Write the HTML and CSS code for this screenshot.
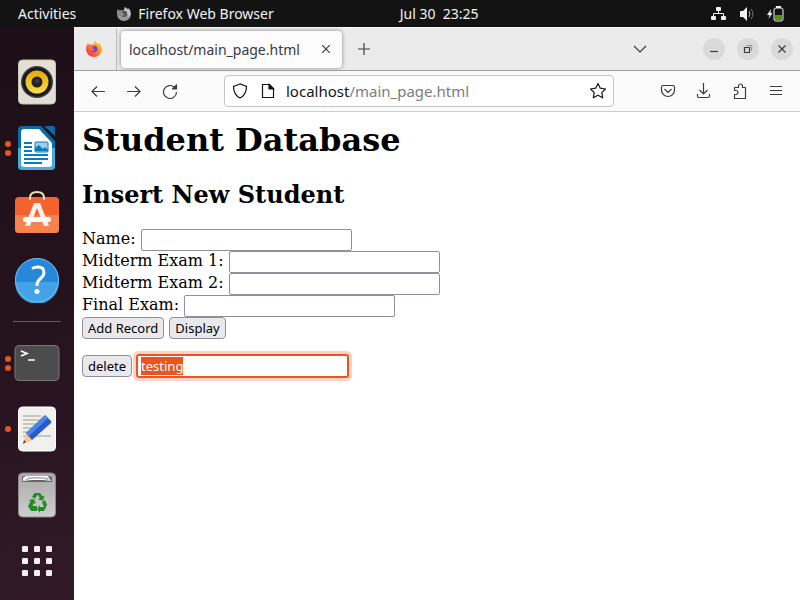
FILE: index.html
```html
<!DOCTYPE html>
<html lang="en">
<head>
<meta charset="utf-8">
<title>Student Database</title>
<link rel="stylesheet" href="styles.css">
</head>
<body>
<header class="topbar">
  <div class="topbar-left">
    <button class="top-btn" type="button">Activities</button>
    <button class="top-btn app-menu" type="button">
      <svg width="16" height="16" viewBox="0 0 16 16" aria-hidden="true"><path d="M8 15A7 7 0 0 1 1 8c0-2 0-3.500 1-5l1 1.500C4 4 5 4 6 4.500L8 4l1-3 2 2 1-1c2 1 3 4 3 6a7 7 0 0 1-7 7Z" fill="#999"/><path d="M9 1 12 4l1-1c2 2 2 6 0 8-1-4-5-4-5-7Z" fill="#c4c4c4"/><path d="M6 5.500c3-2 6 0 5 3-1 3-4 3-6 1.500 2 0 3-1 3-2L6 7Z" fill="#555"/><path d="M2 6q2-2 4-1l1 1.500L5 7.500 7 9q-2 2-5 0Z" fill="#858585"/></svg>
      <span>Firefox Web Browser</span>
    </button>
  </div>
  <button class="top-btn" type="button">Jul 30&nbsp; 23:25</button>
  <button class="top-btn status" type="button" aria-label="System">
    <svg width="16" height="16" viewBox="0 0 16 16" fill="#f2f2f2"><rect x="5" y="1" width="5" height="4" rx="1"/><rect x="0" y="10" width="5" height="4" rx="1"/><rect x="10" y="10" width="5" height="4" rx="1"/><path d="M2.500 10V7.500h10V10M7.500 5v2.500" fill="none" stroke="#f2f2f2"/></svg>
    <svg width="16" height="16" viewBox="0 0 16 16" fill="none"><path d="M1 5h3l4-4v14l-4-4H1Z" fill="#f2f2f2"/><path d="M10 5q2 3 0 6" stroke="#bbb"/><path d="M12 3q4 5 0 10" stroke="#777"/></svg>
    <svg width="17" height="16" viewBox="0 0 17 16" fill="none"><path d="M4 3 0 9h2.500L1.500 13l4-6H3.500Z" fill="#f2f2f2"/><rect x="9" y="0" width="5" height="2" fill="#f2f2f2"/><rect x="7" y="2" width="9" height="13" rx="2" stroke="#f2f2f2"/><rect x="8" y="9" width="7" height="5" fill="#4e9a06"/></svg>
  </button>
</header>
<div class="desktop">
<nav class="dock" aria-label="Applications">
  <button class="dock-item" type="button" aria-label="Rhythmbox">
    <svg width="40" height="46" viewBox="0 0 40 46"><defs><linearGradient id="cone" x2="0" y2="1"><stop stop-color="#e2aa08"/><stop offset="1" stop-color="#ffdc45"/></linearGradient></defs><rect x="1.500" y="1" width="37" height="44" rx="4" fill="#e4dfd3" stroke="#c9c3b6"/><circle cx="20" cy="23" r="16" fill="#3c3d45"/><circle cx="20" cy="23" r="14.500" fill="#171820"/><circle cx="20" cy="23" r="11.500" fill="url(#cone)"/><circle cx="20" cy="23" r="5.500" fill="#202124"/><circle cx="20" cy="22" r="2.500" fill="#383838"/></svg>
  </button>
  <button class="dock-item" type="button" aria-label="LibreOffice Writer">
    <span class="dots"><i></i><i></i></span>
    <svg width="40" height="46" viewBox="0 0 40 46"><path d="M5 1h19l14 15v25q0 4-4 4H5q-4 0-4-4V5q0-4 4-4Z" fill="#096da3"/><path d="M1 23h37v18q0 4-4 4H5q-4 0-4-4Z" fill="#48a9dc"/><path d="M4 7q0-3 3-3h15l13 14v21q0 3-3 3H7q-3 0-3-3Z" fill="#fff"/><path d="M27 1h9q2 0 2 2v8Z" fill="#096da3"/><path d="M7 18h8M7 22h8M7 26h8M7 30h24M7 34h24M7 38h18" stroke="#087bb9" stroke-width="2"/><rect x="18" y="17" width="13" height="10" rx="1" fill="#9bd0ef" stroke="#087bb9"/><path d="M18 26v-3l4-3 4 4 2-2 3 3v1Z" fill="#087bb9"/></svg>
  </button>
  <button class="dock-item" type="button" aria-label="Ubuntu Software">
    <svg width="46" height="46" viewBox="0 0 46 46"><rect x="1" y="6" width="44" height="36" rx="4" fill="#f4632e"/><path d="M1 24h44v14q0 4-4 4H5q-4 0-4-4Z" fill="#f6834e"/><path d="M16 9V7q0-6 7-6t7 6v2" fill="none" stroke="#f3dfaa" stroke-width="2"/><path d="m20 12-9 23h5l7-18 7 18h5l-9-23Z" fill="#fff0e9"/><rect x="9" y="26" width="28" height="5" rx="2.500" fill="#fff"/></svg>
  </button>
  <button class="dock-item" type="button" aria-label="Help">
    <svg width="46" height="46" viewBox="0 0 46 46"><circle cx="23" cy="23" r="22" fill="#2588da"/><path d="M1 25h44a22 22 0 0 1-44 0Z" fill="#43a2e5"/><circle cx="23" cy="23" r="21.500" fill="none" stroke="#72b8ec"/><path d="M18 11.500q3-1.500 6-1.500c4 0 6 2 6 5.500 0 6-7 6-7 12V29" fill="none" stroke="#fff" stroke-width="3"/><circle cx="23" cy="34.500" r="2.500" fill="#fff"/></svg>
  </button>
  <hr class="dock-rule">
  <button class="dock-item" type="button" aria-label="Terminal">
    <span class="dots"><i></i><i></i></span>
    <svg width="46" height="40" viewBox="0 0 46 40"><rect x="1" y="2.500" width="44" height="35" rx="4" fill="#4c4c4c" stroke="#777"/><path d="m7 8 6 2.500L7 13M14 17h7" fill="none" stroke="#fff" stroke-width="1.600"/></svg>
  </button>
  <button class="dock-item" type="button" aria-label="Text Editor">
    <span class="dots"><i></i></span>
    <svg width="40" height="46" viewBox="0 0 40 46"><rect x="1.500" y="1" width="37" height="44" rx="4" fill="#f0f0ee" stroke="#fff"/><path d="M6 10h18M6 14h22M6 18h16M6 22h13M6 26h11M6 30h28" stroke="#c9c6b9" stroke-width="2"/><path d="m6 38 3-11 6 7Z" fill="#ffc38a"/><path d="m6 38 1-4 2 2Z" fill="#444"/><path d="m9 27 18-17q1-1 2 0l5 5q1 1 0 2L15 34Z" fill="#285bcc"/><path d="m9 27 19-18 3 3-19 18Z" fill="#4b85ee"/></svg>
  </button>
  <button class="dock-item" type="button" aria-label="Trash">
    <svg width="40" height="46" viewBox="0 0 40 46"><defs><linearGradient id="bin" x2="0" y2="1"><stop stop-color="#aaa"/><stop offset="1" stop-color="#cecece"/></linearGradient></defs><rect x="1.500" y="1" width="37" height="44" rx="4" fill="url(#bin)" stroke="#8b8b8b"/><path d="M5 10V6q0-2 3-2h24q3 0 3 2v4Z" fill="#666"/><path d="M6 9V6l3-2h22l3 5-8-1H15Z" fill="#fff"/><path d="M8 8q12-5 24 0M10 6h22" fill="none" stroke="#aaa"/><g fill="#218c21"><path d="m15 25 2.500-4H23l2.500 3.500 2-1-1.500 5-5-1 2-1.500-2.500-3.500-2.500 4Z"/><path d="m12 28 5-1 2 5-2-1-1.500 3H20v5h-6l-3-5 2.500-4.500Z"/><path d="m25 30 3-2 2 5-3 6h-4v2l-3-4 3-4v2h4Z"/></g></svg>
  </button>
  <button class="dock-item" type="button" aria-label="Show Applications">
    <svg width="30" height="30" viewBox="0 0 30 30" fill="#f2f0f0"><rect width="6" height="6" rx="1"/><rect x="12" width="6" height="6" rx="1"/><rect x="24" width="6" height="6" rx="1"/><rect y="12" width="6" height="6" rx="1"/><rect x="12" y="12" width="6" height="6" rx="1"/><rect x="24" y="12" width="6" height="6" rx="1"/><rect y="24" width="6" height="6" rx="1"/><rect x="12" y="24" width="6" height="6" rx="1"/><rect x="24" y="24" width="6" height="6" rx="1"/></svg>
  </button>
</nav>
<section class="browser">
  <div class="tabstrip">
    <button class="view-btn" type="button" aria-label="Firefox View">
      <svg width="18" height="18" viewBox="0 0 18 18"><defs><linearGradient id="fox" x1="1" y1="0" x2="0" y2="1"><stop stop-color="#ffe52f"/><stop offset=".45" stop-color="#ff8a20"/><stop offset="1" stop-color="#f21865"/></linearGradient></defs><path d="M9 17A8 8 0 0 1 1 9c0-3 1-4 2-6l1 2 2-1 2 1 1-1 1-3 3 3 1-1c2 1 3 4 3 6a8 8 0 0 1-8 8Z" fill="url(#fox)"/><path d="M6 7q3-3 6 0 2 4-2 5-3 1-5-2Z" fill="#7342d8"/><path d="M2 7q3-2 5-1l2 1-2 1 3 2q-3 2-6-1Z" fill="#ff7427"/></svg>
    </button>
    <div class="tab"><span class="tab-title">localhost/main_page.html</span>
      <button class="icon-btn tab-close" type="button" aria-label="Close tab"><svg width="8" height="8" viewBox="0 0 8 8"><path d="m0 0 8 8M8 0 0 8"/></svg></button>
    </div>
    <button class="icon-btn new-tab" type="button" aria-label="New tab"><svg width="12" height="12" viewBox="0 0 12 12"><path d="M6 0v12M0 6h12"/></svg></button>
    <button class="icon-btn all-tabs" type="button" aria-label="List all tabs"><svg width="14" height="8" viewBox="0 0 14 8"><path d="m1 1 6 6 6-6"/></svg></button>
    <div class="window-controls">
      <button class="win-btn" type="button" aria-label="Minimize"><svg width="10" height="10" viewBox="0 0 10 10"><path d="M1 7.500h8"/></svg></button>
      <button class="win-btn" type="button" aria-label="Restore"><svg width="10" height="10" viewBox="0 0 10 10"><path d="M3 1.500h5.500V7" class="faint"/><path d="M1.500 3.500h5v5h-5Z"/></svg></button>
      <button class="win-btn" type="button" aria-label="Close"><svg width="10" height="10" viewBox="0 0 10 10"><path d="m1.500 1.500 7 7M8.500 1.500l-7 7"/></svg></button>
    </div>
  </div>
  <div class="toolbar">
    <div class="nav-buttons">
      <button class="icon-btn" type="button" aria-label="Back"><svg width="16" height="16" viewBox="0 0 16 16"><path d="M15 8.500H2M7 3.500l-5 5 5 5"/></svg></button>
      <button class="icon-btn" type="button" aria-label="Forward"><svg width="16" height="16" viewBox="0 0 16 16"><path d="M1 8.500h13M9 3.500l5 5-5 5"/></svg></button>
      <button class="icon-btn" type="button" aria-label="Reload"><svg width="16" height="16" viewBox="0 0 16 16"><path d="M12.500 4.300A6.500 6.500 0 1 0 14.500 9"/><path d="M14.500 2v4h-4Z" fill="#3c3c42" stroke-linejoin="round"/></svg></button>
    </div>
    <div class="urlbar">
      <svg width="16" height="16" viewBox="0 0 16 16" aria-hidden="true"><path d="M8 1 1.500 3.500C1.500 9 4 13 8 15c4-2 6.500-6 6.500-11.500Z"/></svg>
      <svg width="16" height="16" viewBox="0 0 16 16" aria-hidden="true"><path d="M2.500 1.500h7l4 4v9h-11Z"/><path d="M9 1.500V6h4.500Z" fill="#15141a"/></svg>
      <div class="url">localhost<span>/main_page.html</span></div>
      <button class="icon-btn" type="button" aria-label="Bookmark this page"><svg width="18" height="18" viewBox="0 0 18 18"><path d="m9 1.500 2.300 4.700 5.200.8-3.700 3.600.9 5.200L9 13.300l-4.700 2.500.9-5.200L1.500 7l5.200-.8Z" stroke-linejoin="round"/></svg></button>
    </div>
    <div class="actions">
      <button class="icon-btn" type="button" aria-label="Save to Pocket"><svg width="16" height="16" viewBox="0 0 16 16"><path d="M3 2.500h10q1.500 0 1.500 1.500v3a6.500 6.500 0 0 1-13 0V4q0-1.500 1.500-1.500ZM4.500 6 8 9.500 11.500 6"/></svg></button>
      <button class="icon-btn" type="button" aria-label="Downloads"><svg width="16" height="16" viewBox="0 0 16 16"><path d="M7.500 0v11M3.500 7l4 4 4-4M1.500 11v2q0 1.500 1.500 1.500h9q1.500 0 1.500-1.500v-2"/></svg></button>
      <button class="icon-btn" type="button" aria-label="Extensions"><svg width="16" height="16" viewBox="0 0 16 16"><path d="M2.500 4.500h4V3a2 2 0 0 1 4 0v1.500h3v11h-11v-4H4a2 2 0 0 0 0-4H2.500Z" stroke-linejoin="round"/></svg></button>
      <button class="icon-btn" type="button" aria-label="Open menu"><svg width="16" height="16" viewBox="0 0 16 16"><path d="M2 3.500h12M2 7.500h12M2 11.500h12"/></svg></button>
    </div>
  </div>
  <main class="page">
    <h1>Student Database</h1>
    <h2>Insert New Student</h2>
    <form>
      <div class="row"><label for="name">Name:</label><input id="name" type="text"></div>
      <div class="row"><label for="mid1">Midterm Exam 1:</label><input id="mid1" type="text"></div>
      <div class="row"><label for="mid2">Midterm Exam 2:</label><input id="mid2" type="text"></div>
      <div class="row"><label for="final">Final Exam:</label><input id="final" type="text"></div>
      <div class="row"><button type="button">Add Record</button><button type="button">Display</button></div>
    </form>
    <form class="delete-form">
      <div class="row"><button type="button">delete</button><input id="target" type="text" value="testing" aria-label="Student to delete"></div>
    </form>
  </main>
</section>
</div>
<script src="main.js"></script>
</body>
</html>
```
FILE: styles.css
```css
* {
  box-sizing: border-box;
}

body {
  margin: 0;
  min-height: 100vh;
  display: flex;
  flex-direction: column;
  font-family: "Noto Sans", sans-serif;
  background: #fff;
}

button {
  font: inherit;
  color: inherit;
  border: 0;
  background: none;
  padding: 0;
}

svg {
  display: block;
  flex: none;
}

/* Top panel */
.topbar {
  display: grid;
  grid-template-columns: 5fr auto 4fr;
  align-items: center;
  height: 27px;
  padding: 0 16px 0 18px;
  background: #131313;
  color: #f2f2f2;
  font-size: 14px;
  line-height: 20px;
  white-space: nowrap;
}

.topbar-left {
  display: flex;
  gap: 40px;
}

.app-menu {
  display: flex;
  align-items: center;
  gap: 6px;
}

.status {
  justify-self: end;
  display: flex;
  gap: 12px;
}

.desktop {
  flex: 1;
  display: flex;
}

/* Dock */
.dock {
  flex: none;
  width: 74px;
  padding-top: 22px;
  background: linear-gradient(165deg, #1c0f17, #25131e 55%, #321a28);
}

.dock-item {
  position: relative;
  display: flex;
  align-items: center;
  justify-content: center;
  width: 100%;
  height: 66px;
}

.dock-rule {
  width: 48px;
  height: 1px;
  margin: 8px auto;
  border: 0;
  background: #67565f;
}

.dots {
  position: absolute;
  left: 5px;
  top: 0;
  bottom: 0;
  display: flex;
  flex-direction: column;
  justify-content: center;
  gap: 3px;
}

.dots i {
  width: 6px;
  height: 6px;
  border-radius: 50%;
  background: #e95420;
}

/* Browser chrome */
.browser {
  flex: 1;
  min-width: 0;
}

.tabstrip {
  display: flex;
  align-items: center;
  height: 44px;
  padding-right: 7px;
  background: #ebebeb;
  border-top: 1px solid #fafafa;
  border-bottom: 1px solid #a0a0a2;
  font-size: 14px;
}

.view-btn {
  display: flex;
  align-items: center;
  justify-content: center;
  align-self: stretch;
  width: 43px;
  padding-right: 2px;
  border-right: 1px solid #bbb;
}

.tab {
  display: flex;
  align-items: center;
  justify-content: space-between;
  width: 221px;
  height: 37px;
  margin-left: 4px;
  padding: 0 12px 0 8px;
  border-radius: 4px;
  background: #fcfcfc;
  box-shadow: 0 0 4px #888;
  color: #3a3944;
}

.icon-btn {
  display: flex;
}

.icon-btn svg,
.win-btn svg,
.urlbar svg {
  fill: none;
  stroke: #3c3c42;
  stroke-width: 1.2px;
}

.win-btn .faint {
  stroke: #999;
}

.new-tab {
  margin-left: 16px;
}

.all-tabs {
  margin-left: auto;
}

.window-controls {
  display: flex;
  gap: 12px;
  margin-left: 56px;
}

.win-btn {
  display: flex;
  align-items: center;
  justify-content: center;
  width: 22px;
  height: 22px;
  border-radius: 50%;
  background: #dadada;
}

.toolbar {
  display: flex;
  align-items: center;
  height: 41px;
  padding: 0 16px;
  background: #fbfbfb;
  border-bottom: 1px solid #ccc;
}

.nav-buttons {
  display: flex;
  gap: 20px;
}

.urlbar {
  flex: 1;
  display: flex;
  align-items: center;
  gap: 12px;
  height: 32px;
  margin: 0 46px;
  padding: 0 6px 0 7px;
  border: 1px solid #c4c4c6;
  border-radius: 4px;
  background: #fff;
  font-size: 15px;
}

.urlbar svg {
  stroke: #15141a;
}

.url {
  flex: 1;
  margin-left: -2px;
  color: #15141a;
}

.url span {
  color: #7c7c80;
}

.actions {
  display: flex;
  gap: 20px;
}

/* Page */
.page {
  padding: 9px 8px 8px;
  font-family: "DejaVu Serif", serif;
  font-size: 16px;
  color: #000;
}

.page h1 {
  margin: 0 0 21px;
  font-size: 32px;
  line-height: 38px;
}

.page h2 {
  margin: 0 0 20px;
  font-size: 24px;
  line-height: 29px;
}

.row {
  display: flex;
  align-items: flex-start;
  gap: 5px;
  height: 22px;
}

.row label {
  line-height: 20px;
}

.delete-form {
  margin-top: 16px;
}

.page input,
.page button {
  height: 22px;
  border: 1px solid #8f8f9d;
  font-family: "Noto Sans", sans-serif;
  font-size: 13px;
  line-height: 18px;
}

.page input {
  width: 211px;
  padding: 0 3px;
  border-radius: 2px;
  background: #fff;
}

.page button {
  padding: 0 5px;
  border-radius: 4px;
  background: #e9e9ed;
}

.page input:focus {
  border-color: #e95420;
  outline: none;
  box-shadow: 0 0 0 1px #e95420, 0 0 0 4px #fbd4c7;
}

.page input::selection {
  background: #e95420;
  color: #fff;
}
```
FILE: main.js
```js
const target = document.getElementById("target");
target.focus();
target.select();
```
